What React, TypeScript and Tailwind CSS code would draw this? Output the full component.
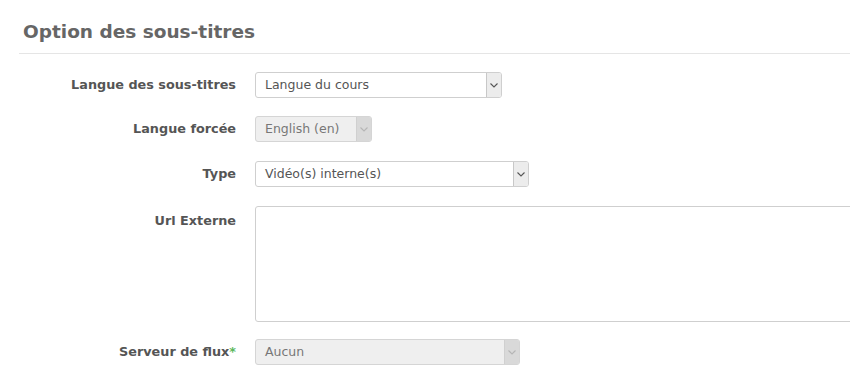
import React from "react";

function Chevron({ light }: { light?: boolean }) {
  return (
    <svg width="8" height="5" viewBox="0 0 8 5" fill="none">
      <path d="M0.5 0.5 L4 4 L7.5 0.5" stroke={light ? "#b5b5b5" : "#555"} strokeWidth="1.1" />
    </svg>
  );
}

function Select({ value, width, disabled }: { value: string; width: string; disabled?: boolean }) {
  return (
    <div
      className={`flex h-[26px] items-stretch rounded-[3px] border ${disabled ? "border-[#d5d5d5] bg-[#efefef]" : "border-[#cfcfcf] bg-white"} ${width}`}
    >
      <div className={`flex flex-1 items-center pl-[9px] text-[12.5px] ${disabled ? "text-[#777]" : "text-[#555]"}`}>{value}</div>
      <div
        className={`flex w-[15px] items-center justify-center rounded-r-[2px] border-l ${disabled ? "border-[#d0d0d0] bg-[#d9d9d9]" : "border-[#c8c8c8] bg-[#ececec]"}`}
      >
        <Chevron light={disabled} />
      </div>
    </div>
  );
}

function Row({ label, children, star, top, mt }: { label: string; children: React.ReactNode; star?: boolean; top?: boolean; mt: string }) {
  return (
    <div className={`flex ${top ? "items-start" : "items-center"} ${mt}`}>
      <div className={`w-[237px] shrink-0 pr-[1px] text-right text-[12.8px] font-bold text-[#555] ${top ? "pt-[5px]" : ""}`}>
        {label}
        {star && <span className="text-[#5cb85c]">*</span>}
      </div>
      <div className="ml-[18px] min-w-0 flex-1">{children}</div>
    </div>
  );
}

export default function App() {
  return (
    <div className="h-[382px] w-[850px] overflow-hidden bg-white" style={{ fontFamily: '"DejaVu Sans", Verdana, sans-serif' }}>
      <div className="ml-[19px] pt-[20px]">
        <h2 className="pl-[4px] text-[18.5px] font-bold leading-[24px] text-[#666]">Option des sous-titres</h2>
        <div className="mt-[9px] h-[1px] bg-[#e5e5e5]" />
      </div>
      <div>
        <Row label="Langue des sous-titres" mt="mt-[18px]">
          <Select value="Langue du cours" width="w-[247px]" />
        </Row>
        <Row label="Langue forcée" mt="mt-[18px]">
          <Select value="English (en)" width="w-[117px]" disabled />
        </Row>
        <Row label="Type" mt="mt-[19px]">
          <Select value="Vidéo(s) interne(s)" width="w-[274px]" />
        </Row>
        <Row label="Url Externe" mt="mt-[19px]" top>
          <div className="h-[116px] w-[620px] rounded-[3px] border border-[#cfcfcf] bg-white" />
        </Row>
        <Row label="Serveur de flux" star mt="mt-[17px]">
          <Select value="Aucun" width="w-[265px]" disabled />
        </Row>
      </div>
    </div>
  );
}
